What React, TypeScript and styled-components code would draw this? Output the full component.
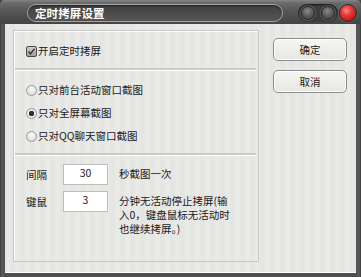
import React from 'react'
import styled, { createGlobalStyle } from 'styled-components'

const GlobalStyle = createGlobalStyle`
  html, body {
    margin: 0;
    padding: 0;
    background: #fff;
  }
  * {
    box-sizing: border-box;
  }
`

const FONT = `"Noto Sans CJK SC", "Liberation Sans", sans-serif`

const App = () => {
  return (
    <>
      <GlobalStyle />
      <Window>
        <TitleBar>
          <TitlePill>定时拷屏设置</TitlePill>
          <Controls>
            <Groove>
              <Knob />
              <Knob />
            </Groove>
            <Knob $red />
          </Controls>
        </TitleBar>

        <Body>
          <GroupBox>
            <CheckRow>
              <CheckBox>
                <svg width="9" height="9" viewBox="0 0 9 9">
                  <path d="M1.5 4.5 L3.5 6.8 L7.5 1.8" fill="none" stroke="#3a3a3a" strokeWidth="1.4" />
                </svg>
              </CheckBox>
              <Label>开启定时拷屏</Label>
            </CheckRow>

            <Divider />

            <RadioList>
              {RADIO_OPTIONS.map(option => (
                <RadioRow key={option.id}>
                  <Radio $checked={option.checked} />
                  <Label>{option.text}</Label>
                </RadioRow>
              ))}
            </RadioList>

            <Divider />

            <FieldGrid>
              <FieldLabel>间隔</FieldLabel>
              <NumberBox>30</NumberBox>
              <Hint>秒截图一次</Hint>

              <FieldLabel>键鼠</FieldLabel>
              <NumberBox>3</NumberBox>
              <Hint>
                <HintLine>分钟无活动停止拷屏(输</HintLine>
                <HintLine>入0，键盘鼠标无活动时</HintLine>
                <HintLine>也继续拷屏。)</HintLine>
              </Hint>
            </FieldGrid>
          </GroupBox>

          <ButtonColumn>
            <Button>确定</Button>
            <Button>取消</Button>
          </ButtonColumn>
        </Body>
      </Window>
    </>
  )
}

export default App

const RADIO_OPTIONS = [
  { id: 1, text: '只对前台活动窗口截图', checked: false },
  { id: 2, text: '只对全屏幕截图', checked: true },
  { id: 3, text: '只对QQ聊天窗口截图', checked: false },
]

const Window = styled.div`
  width: 361px;
  height: 277px;
  display: flex;
  flex-direction: column;
  background: linear-gradient(90deg, #3c3c3c 0, #5c5c5c 2px, #4e4e4e 5px, #4e4e4e calc(100% - 5px), #5a5a5a calc(100% - 2px), #3a3a3a 100%);
  font-family: ${FONT};
  overflow: hidden;
`

const TitleBar = styled.div`
  height: 24px;
  flex-shrink: 0;
  display: flex;
  align-items: center;
  padding: 0 4px 0 27px;
  background: linear-gradient(180deg, #858585 0, #6a6a6a 3px, #545454 12px, #444 24px);
  border-top-left-radius: 5px;
  border-top-right-radius: 5px;
`

const TitlePill = styled.div`
  width: 256px;
  height: 18px;
  margin-top: 2px;
  border: 1px solid #a4a4a4;
  border-radius: 9px;
  background: linear-gradient(180deg, #3f3f3f, #4d4d4d 60%, #555);
  box-shadow: inset 0 1px 2px rgba(0, 0, 0, 0.5);
  color: #fff;
  font-size: 11.5px;
  font-weight: bold;
  line-height: 16px;
  padding-left: 7px;
  letter-spacing: 0.1px;
`

const Controls = styled.div`
  margin-left: auto;
  display: flex;
  align-items: center;
  gap: 1px;
  margin-top: 2px;
`

const Groove = styled.div`
  display: flex;
  align-items: center;
  gap: 6px;
  padding: 2px 3px;
  border-radius: 10px;
  background: #3c3c3c;
  box-shadow: inset 0 1px 2px rgba(0, 0, 0, 0.6);
`

const Knob = styled.div<{ $red?: boolean }>`
  width: ${p => (p.$red ? '18px' : '14px')};
  height: ${p => (p.$red ? '18px' : '14px')};
  border-radius: 50%;
  border: 1px solid ${p => (p.$red ? '#2a2a2a' : '#2c2c2c')};
  background: ${p =>
    p.$red
      ? 'radial-gradient(circle at 40% 35%, #ff8a8a 0, #e53a3a 35%, #b81414 80%)'
      : 'radial-gradient(circle at 45% 35%, #8a8a8a 0, #5a5a5a 50%, #3a3a3a 100%)'};
  box-shadow: 0 0 0 1px rgba(120, 120, 120, 0.5);
`

const Body = styled.div`
  flex: 1;
  margin: 0 5px 5px 5px;
  display: flex;
  align-items: flex-start;
  gap: 14px;
  padding: 6px 9px 10px 8px;
  background: repeating-linear-gradient(90deg, #e9e9e6 0, #e9e9e6 5px, #e5e5e3 5px, #e5e5e3 10px);
  border-bottom: 1px solid #fff;
`

const GroupBox = styled.div`
  width: 246px;
  height: 232px;
  border: 1px solid #c6c6c4;
  box-shadow: inset 1px 1px 0 #fff;
  display: flex;
  flex-direction: column;
  padding: 14px 2px 0 1px;
`

const Label = styled.span`
  font-size: 10.5px;
  color: #1a1a1a;
  line-height: 12px;
`

const CheckRow = styled.div`
  display: flex;
  align-items: center;
  gap: 1px;
  padding-left: 11px;
`

const CheckBox = styled.div`
  width: 11px;
  height: 11px;
  border: 1px solid #4a4a4a;
  border-radius: 2px;
  background: linear-gradient(180deg, #cfcfcf, #9c9c9c);
  display: flex;
  align-items: center;
  justify-content: center;
`

const Divider = styled.div`
  height: 2px;
  margin: 11px 0 0 0;
  background: #cbcbc9;
  border-bottom: 1px solid #fff;
  box-sizing: content-box;
`

const RadioList = styled.div`
  display: flex;
  flex-direction: column;
  gap: 11px;
  padding: 13px 0 0 11px;
`

const RadioRow = styled.div`
  display: flex;
  align-items: center;
  gap: 1px;
`

const Radio = styled.div<{ $checked?: boolean }>`
  width: 11px;
  height: 11px;
  border-radius: 50%;
  border: 1px solid #9a9a9a;
  background: ${p =>
    p.$checked
      ? 'radial-gradient(circle, #2e2e2e 0, #2e2e2e 2.5px, #f0f0f0 3px, #d0d0d0 100%)'
      : 'radial-gradient(circle at 50% 35%, #fafafa, #d4d4d4)'};
`

const FieldGrid = styled.div`
  display: grid;
  grid-template-columns: 26px 45px auto;
  column-gap: 11px;
  row-gap: 6px;
  padding: 8px 0 0 11px;
  align-items: start;
`

const FieldLabel = styled.span`
  font-size: 10.5px;
  color: #1a1a1a;
  line-height: 12px;
  padding-top: 5px;
`

const NumberBox = styled.div`
  height: 21px;
  border: 1px solid #bdbdbb;
  background: #fff;
  font-size: 10.5px;
  line-height: 12px;
  padding-top: 2px;
  text-align: center;
  color: #1a1a1a;
`

const Hint = styled.div`
  font-size: 10.5px;
  color: #1a1a1a;
  line-height: 14px;
  padding-top: 3px;
  display: flex;
  flex-direction: column;
`

const HintLine = styled.span`
  white-space: nowrap;
`

const ButtonColumn = styled.div`
  display: flex;
  flex-direction: column;
  gap: 9px;
  padding-top: 8px;
`

const Button = styled.button`
  width: 74px;
  height: 23px;
  border: 1px solid #8c8c8c;
  border-radius: 5px;
  background: linear-gradient(180deg, #f6f6f4, #e6e6e3);
  box-shadow: inset 0 0 0 1px #fff;
  font-family: ${FONT};
  font-size: 10.5px;
  color: #1a1a1a;
  padding: 0;
  line-height: 12px;
`
